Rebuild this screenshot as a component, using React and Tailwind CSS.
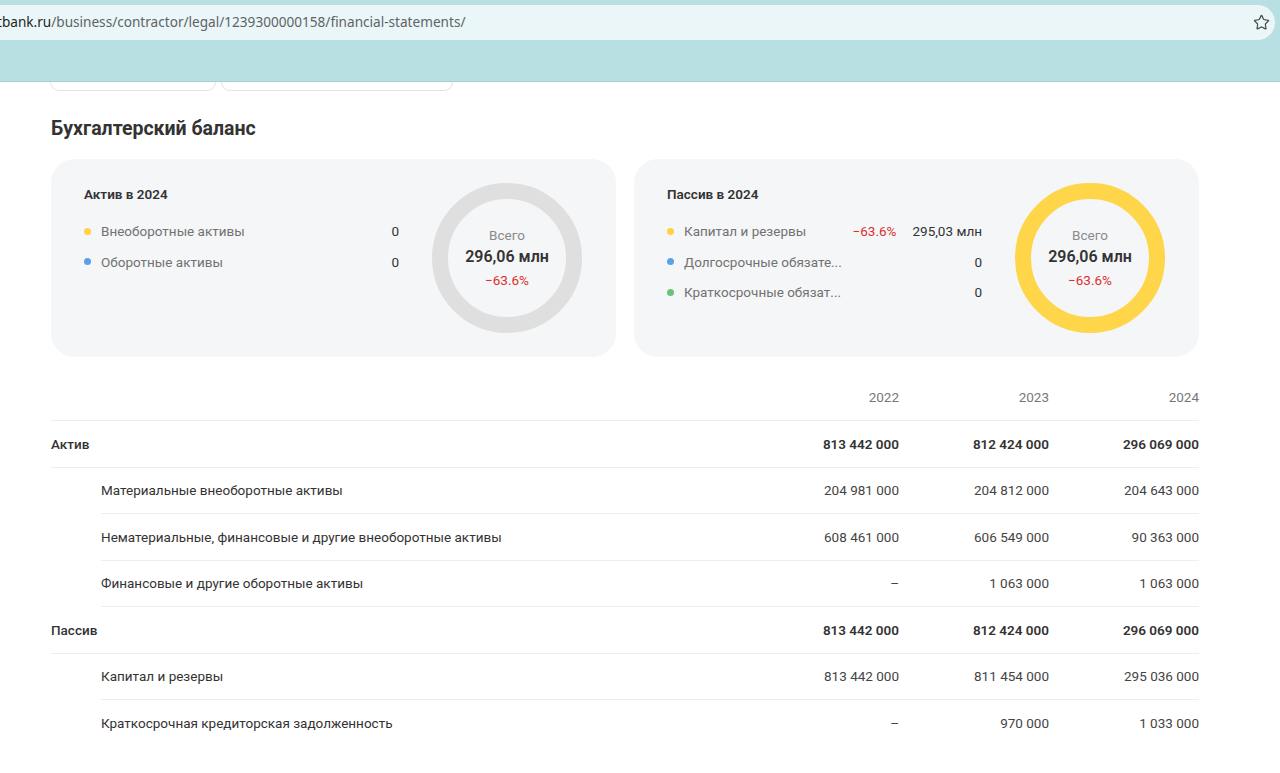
import React from "react";
import { Star } from "lucide-react";

const font = { fontFamily: "Roboto, 'Noto Sans', sans-serif" };

function Donut({ color }) {
  return (
    <div className="relative w-[150px] h-[150px] shrink-0">
      <svg width="150" height="150" viewBox="0 0 150 150" className="absolute inset-0">
        <circle cx="75" cy="75" r="67" fill="none" stroke={color} strokeWidth="16" />
      </svg>
      <div className="absolute inset-0 flex flex-col items-center justify-center">
        <div className="text-[13.5px] text-[#8a8a8a] leading-[16px] mt-[-2px]">Всего</div>
        <div className="text-[16px] font-semibold text-[#333] leading-[20px] mt-[4px]">296,06 млн</div>
        <div className="text-[13.5px] text-[#dd2e2e] leading-[16px] mt-[5px]">−63.6%</div>
      </div>
    </div>
  );
}

function Dot({ color }) {
  return <span className="w-[7px] h-[7px] rounded-full shrink-0" style={{ backgroundColor: color }} />;
}

function LegendRow({ color, label, value, change }) {
  return (
    <div className="flex items-center h-[30.5px]">
      <Dot color={color} />
      <span className="ml-[10px] text-[13.5px] text-[#727272] flex-1 truncate">{label}</span>
      {change && <span className="text-[13.5px] text-[#dd2e2e] mr-[16px]">{change}</span>}
      <span className="text-[13.5px] text-[#333]">{value}</span>
    </div>
  );
}

function Card({ title, rows, ring }) {
  return (
    <div className="flex-1 bg-[#f5f6f7] rounded-[24px] h-[198px] flex pl-[33px] pr-[34px] py-[24px] gap-[33px]">
      <div className="flex-1 pt-[2px]">
        <div className="text-[13.5px] font-semibold text-[#333] leading-[18px] h-[18px]">{title}</div>
        <div className="mt-[13px]">
          {rows.map((r, i) => (
            <LegendRow key={i} {...r} />
          ))}
        </div>
      </div>
      <Donut color={ring} />
    </div>
  );
}

const tableRows = [
  { label: "Актив", bold: true, v: ["813 442 000", "812 424 000", "296 069 000"] },
  { label: "Материальные внеоборотные активы", v: ["204 981 000", "204 812 000", "204 643 000"] },
  { label: "Нематериальные, финансовые и другие внеоборотные активы", v: ["608 461 000", "606 549 000", "90 363 000"] },
  { label: "Финансовые и другие оборотные активы", v: ["–", "1 063 000", "1 063 000"] },
  { label: "Пассив", bold: true, v: ["813 442 000", "812 424 000", "296 069 000"] },
  { label: "Капитал и резервы", v: ["813 442 000", "811 454 000", "295 036 000"] },
  { label: "Краткосрочная кредиторская задолженность", v: ["–", "970 000", "1 033 000"], last: true },
];

export default function App() {
  return (
    <div className="w-[1280px] h-[773px] overflow-hidden bg-white" style={font}>
      {/* browser chrome */}
      <div className="bg-[#b8e0e3] h-[82px] border-b border-[#a8cfd2] pt-[5px]">
        <div className="w-[1275px] h-[35px] bg-[#eaf6f7] rounded-r-[18px] flex items-center justify-between">
          <div className="text-[13.6px] ml-[-3px] whitespace-nowrap" style={{ fontFamily: "'Noto Sans', 'Open Sans', sans-serif" }}>
            <span className="text-[#1f1f1f]">tbank.ru</span>
            <span className="text-[#5f6368]">/business/contractor/legal/1239300000158/financial-statements/</span>
          </div>
          <Star size={17} strokeWidth={1.7} className="text-[#474747] mr-[5px]" />
        </div>
      </div>

      {/* content */}
      <div className="px-[51px]">
        {/* cut-off buttons */}
        <div className="flex gap-[5px] h-[9px] ml-[-1px]">
          <div className="w-[166px] h-[9px] border-x border-b border-[#e3e3e3] rounded-b-[9px]" />
          <div className="w-[232px] h-[9px] border-x border-b border-[#e3e3e3] rounded-b-[9px]" />
        </div>

        <h2 className="mt-[26px] text-[19.5px] font-bold text-[#333] leading-[24px]">Бухгалтерский баланс</h2>

        <div className="mt-[18px] flex gap-[18px] w-[1148px]">
          <Card
            title="Актив в 2024"
            ring="#dfdfdf"
            rows={[
              { color: "#ffd23f", label: "Внеоборотные активы", value: "0" },
              { color: "#5aa1e6", label: "Оборотные активы", value: "0" },
            ]}
          />
          <Card
            title="Пассив в 2024"
            ring="#ffd54a"
            rows={[
              { color: "#ffd23f", label: "Капитал и резервы", value: "295,03 млн", change: "−63.6%" },
              { color: "#5aa1e6", label: "Долгосрочные обязате...", value: "0" },
              { color: "#6cc27a", label: "Краткосрочные обязат...", value: "0" },
            ]}
          />
        </div>

        <div className="mt-[18px] w-[1148px]">
          <div className="flex items-center h-[46px] border-b border-[#eceef0] text-[13.5px] text-[#777]">
            <div className="flex-1" />
            <div className="w-[150px] text-right">2022</div>
            <div className="w-[150px] text-right">2023</div>
            <div className="w-[150px] text-right">2024</div>
          </div>
          {tableRows.map((r, i) => (
            <div key={i} className={r.bold ? "" : "pl-[50px]"}>
              <div
                className={
                  "flex items-center h-[46.5px] text-[13.5px] " +
                  (r.last ? "" : "border-b border-[#eceef0]")
                }
              >
                <div className={"flex-1 " + (r.bold ? "font-medium text-[#333]" : "text-[#333]")}>{r.label}</div>
                {r.v.map((v, j) => (
                  <div
                    key={j}
                    className={"w-[150px] text-right " + (r.bold ? "font-semibold text-[#333]" : "text-[#444]")}
                  >
                    {v}
                  </div>
                ))}
              </div>
            </div>
          ))}
        </div>
      </div>
    </div>
  );
}
